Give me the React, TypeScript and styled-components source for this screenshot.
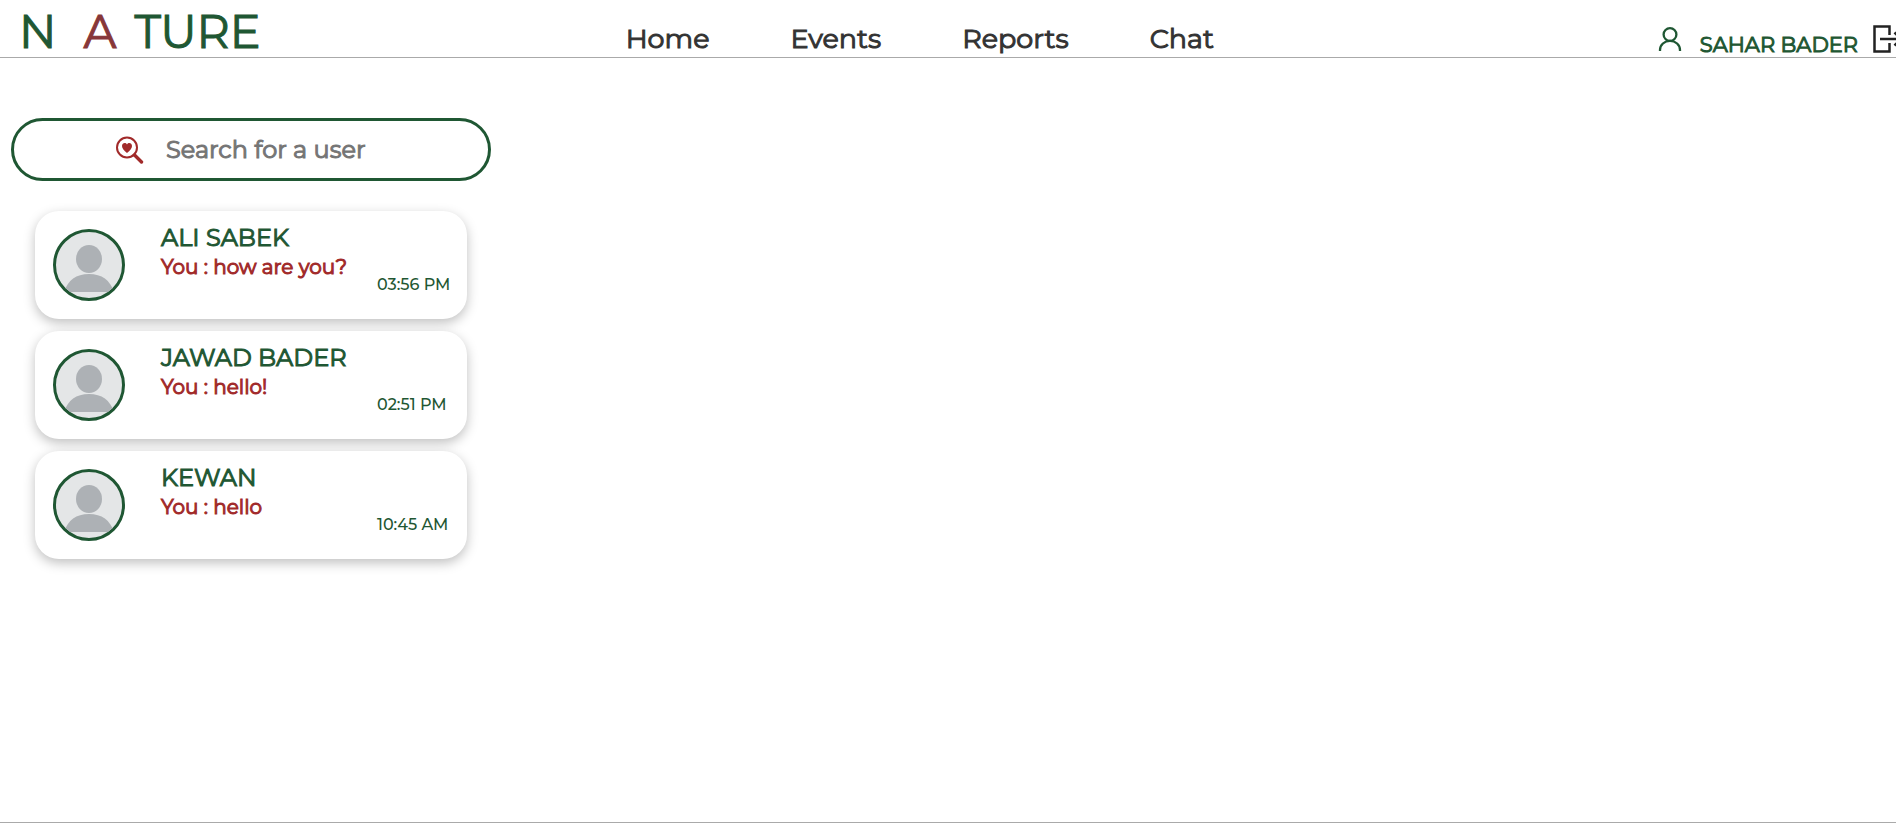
import React from "react";
import styled, { createGlobalStyle } from "styled-components";

const green = "#1f5733";
const red = "#a12a2a";

const GlobalStyle = createGlobalStyle`
  * { box-sizing: border-box; }
  body {
    margin: 0;
    background: #fff;
    color: ${green};
    font-family: Montserrat, Inter, "Open Sans", sans-serif;
    -webkit-text-stroke: 1px;
    overflow: hidden;
  }
`;

const Page = styled.div`
  min-height: 100vh;
  display: flex;
  flex-direction: column;
  padding-bottom: 8px;
`;

const Header = styled.header`
  display: grid;
  grid-template-columns: 33% auto 1fr;
  height: 58px;
  border-bottom: 1px solid #aaa;
`;

const Logo = styled.a`
  display: flex;
  padding-left: 19px;
  color: ${green};
  font-size: 46px;
  font-weight: 400;
  line-height: 64px;
  text-decoration: none;
`;

const LogoAccent = styled.span`
  color: #873739;
  margin: 0 18px 0 27px;
`;

const Nav = styled.nav`
  display: flex;
  gap: 81px;
`;

const NavLink = styled.a`
  color: #333;
  font-size: 27px;
  font-weight: 400;
  line-height: 78px;
  text-decoration: none;
`;

const Account = styled.div`
  display: flex;
  justify-content: flex-end;
  min-width: 0;
  margin-right: -6px;
`;

const UserIcon = styled.svg`
  width: 24px;
  height: 26px;
  margin: 26px 18px 0 0;
`;

const UserName = styled.span`
  font-size: 21px;
  font-weight: 400;
  line-height: 90px;
  white-space: nowrap;
`;

const LogoutButton = styled.button`
  width: 29px;
  height: 28px;
  margin: 25px 0 0 15px;
  padding: 0;
  border: 0;
  background: none;
  flex-shrink: 0;
  svg { display: block; }
`;

const Main = styled.main`
  flex: 1;
  border-bottom: 1px solid #aaa;
  padding: 60px 11px 24px;
`;

const Sidebar = styled.aside`
  width: 480px;
  max-width: 100%;
`;

const SearchBox = styled.label`
  display: flex;
  align-items: center;
  gap: 22px;
  height: 63px;
  padding: 0 24px 0 102px;
  border: 3px solid ${green};
  border-radius: 32px;
  svg { flex-shrink: 0; }
`;

const SearchInput = styled.input`
  flex: 1;
  min-width: 0;
  padding: 0;
  border: 0;
  outline: 0;
  background: none;
  color: ${green};
  font: inherit;
  font-size: 24px;
  font-weight: 400;
  &::placeholder { color: #757575; opacity: 1; }
`;

const ChatList = styled.ul`
  display: flex;
  flex-direction: column;
  gap: 12px;
  margin: 30px 24px 0;
  padding: 0;
  list-style: none;
`;

const ChatCard = styled.li`
  display: grid;
  grid-template-columns: 72px 1fr 78px;
  column-gap: 36px;
  height: 108px;
  padding: 12px;
  padding-left: 18px;
  border-radius: 24px;
  background: #fff;
  box-shadow: 0 4px 12px rgba(0, 0, 0, 0.25);
  white-space: nowrap;
`;

const Avatar = styled.svg`
  width: 72px;
  height: 72px;
  margin-top: 6px;
  border: 3px solid ${green};
  border-radius: 50%;
  background: #e4e6e7;
`;

const Details = styled.div`
  min-width: 0;
`;

const Name = styled.div`
  font-size: 24px;
  font-weight: 400;
  line-height: 30px;
`;

const Message = styled.div`
  color: ${red};
  font-size: 20px;
  font-weight: 400;
  line-height: 28px;
`;

const Time = styled.time`
  padding-top: 50px;
  font-size: 16px;
  font-weight: 500;
  line-height: 24px;
  -webkit-text-stroke: 0;
`;

const chats = [
  { name: "ALI SABEK", message: "You : how are you?", time: "03:56 PM" },
  { name: "JAWAD BADER", message: "You : hello!", time: "02:51 PM" },
  { name: "KEWAN", message: "You : hello", time: "10:45 AM" },
];

export default function App() {
  return (
    <Page>
      <GlobalStyle />
      <Header>
        <Logo href="#">
          <span>N</span>
          <LogoAccent>A</LogoAccent>
          <span>TURE</span>
        </Logo>
        <Nav>
          {["Home", "Events", "Reports", "Chat"].map((item) => (
            <NavLink key={item} href={`#${item.toLowerCase()}`}>{item}</NavLink>
          ))}
        </Nav>
        <Account>
          <UserIcon viewBox="0 0 24 26" fill="none" stroke={green} strokeWidth="2.3">
            <circle cx="12" cy="8.5" r="6.4" />
            <path d="M2 25v-1a10 9.2 0 0 1 20 0v1" />
          </UserIcon>
          <UserName>SAHAR BADER</UserName>
          <LogoutButton aria-label="Log out">
            <svg width="29" height="28" viewBox="0 0 29 28" fill="none" stroke="#222" strokeWidth="2.5">
              <path d="M16.5 10V1.500H1.500v25h15V18M7 14h21M21.500 7.500L28 14l-6.500 6.500" />
            </svg>
          </LogoutButton>
        </Account>
      </Header>
      <Main>
        <Sidebar>
          <SearchBox>
            <svg width="28" height="28" viewBox="0 0 28 28">
              <circle cx="11" cy="11.5" r="10" fill="none" stroke={red} strokeWidth="2" />
              <path d="M18.5 19l7 7" stroke={red} strokeWidth="3.4" strokeLinecap="round" />
              <path d="M11 17C8 14.5 6 12.5 6 10c0-3 3.6-4 5-1.5C12.4 6 16 7 16 10c0 2.500-2 4.500-5 7z" fill={red} />
            </svg>
            <SearchInput type="search" placeholder="Search for a user" aria-label="Search for a user" />
          </SearchBox>
          <ChatList>
            {chats.map((chat) => (
              <ChatCard key={chat.name}>
                <Avatar viewBox="0 0 66 66" aria-hidden="true">
                  <ellipse cx="33" cy="27" rx="13" ry="14" fill="#adb1b5" />
                  <path d="M8 60C12 48 20 42 33 42s21 6 25 18z" fill="#adb1b5" />
                </Avatar>
                <Details>
                  <Name>{chat.name}</Name>
                  <Message>{chat.message}</Message>
                </Details>
                <Time>{chat.time}</Time>
              </ChatCard>
            ))}
          </ChatList>
        </Sidebar>
      </Main>
    </Page>
  );
}
